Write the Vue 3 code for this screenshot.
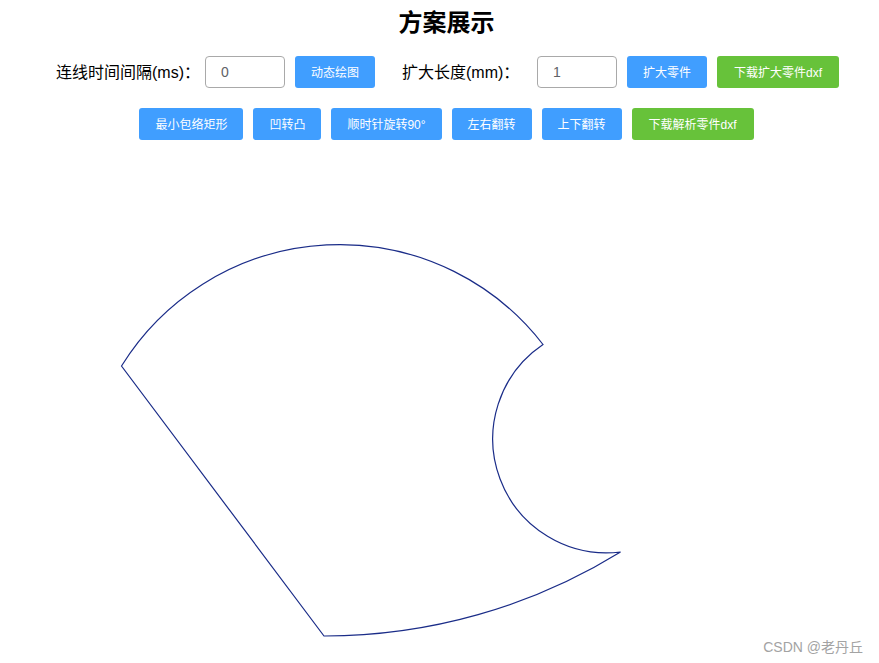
<script setup>
import { ref } from 'vue';

const interval = ref('0');
const expand = ref('1');

const topBlue = ['最小包络矩形', '凹转凸', '顺时针旋转90°', '左右翻转', '上下翻转'];

// 轮廓: 大圆弧 -> 内凹圆弧 -> 底部圆弧 -> 直线
const outline = 'M121.5 366 A256.8 256.8 0 0 1 543 344.5 A113.9 113.9 0 0 0 620.5 552 A563 563 0 0 1 324 636 Z';
</script>

<template>
  <div class="page">
    <div class="header">
      <h2 class="title">方案展示</h2>
      <div class="row">
        <span class="label label-first">连线时间间隔(ms)：</span>
        <input v-model="interval" class="num-input" type="text">
        <button class="btn">动态绘图</button>
        <span class="label label-second">扩大长度(mm)：</span>
        <input v-model="expand" class="num-input" type="text">
        <button class="btn">扩大零件</button>
        <button class="btn btn-green">下载扩大零件dxf</button>
      </div>
      <div class="row row-second">
        <button v-for="item in topBlue" :key="item" class="btn">{{ item }}</button>
        <button class="btn btn-green">下载解析零件dxf</button>
      </div>
    </div>
    <svg class="canvas" width="879" height="523" viewBox="0 140 879 523">
      <path :d="outline" fill="none" stroke="#1a2c88" stroke-width="1.2" />
    </svg>
    <span class="watermark">CSDN @老丹丘</span>
  </div>
</template>

<style scoped>
.page {
  position: relative;
  width: 879px;
  height: 663px;
  overflow: hidden;
  background: #fff;
  font-family: "Liberation Sans", "Noto Sans CJK SC", sans-serif;
}

.header {
  padding-left: 14px;
}

.title {
  margin: 0;
  height: 56px;
  line-height: 45px;
  font-size: 24px;
  font-weight: 700;
  text-align: center;
  color: #000;
}

.row {
  display: flex;
  justify-content: center;
  align-items: center;
  height: 32px;
}

.row-second {
  margin-top: 20px;
  gap: 10px;
}

.label {
  padding-bottom: 3px;
  font-size: 16px;
  color: #000;
  white-space: nowrap;
}

.label-first {
  width: 149px;
  margin-left: 2px;
}

.label-second {
  width: 135px;
  margin-left: 27px;
}

.num-input {
  box-sizing: border-box;
  width: 80px;
  height: 32px;
  padding: 0 15px;
  border: 1px solid #a9a9a9;
  border-radius: 4px;
  outline: none;
  font-family: inherit;
  font-size: 14px;
  color: #606266;
}

.btn {
  height: 32px;
  margin-left: 10px;
  padding: 0 16px 1px;
  border: none;
  border-radius: 3px;
  background: #409eff;
  color: #fff;
  font-family: inherit;
  font-size: 12px;
  white-space: nowrap;
  cursor: pointer;
}

.row-second .btn {
  margin-left: 0;
}

.btn-green {
  padding: 0 17px 1px;
  background: #67c23a;
}

.canvas {
  display: block;
}

.watermark {
  position: absolute;
  right: 16px;
  bottom: 7px;
  font-size: 14px;
  line-height: 18px;
  color: #a3a3a3;
}
</style>
